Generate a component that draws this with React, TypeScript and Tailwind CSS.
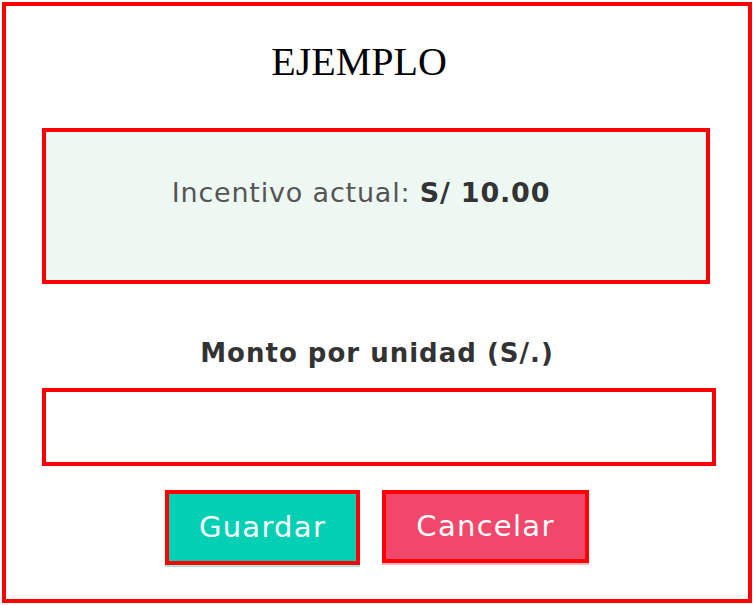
export default function App() {
  return (
    <div className="w-[754px] h-[605px] bg-white p-[2px]">
      <div className="w-[750px] h-[601px] border-4 border-[#ff0000] flex flex-col">
        <div className="h-[122px] pt-[33px] pr-[36px] text-center">
          <h1 className="text-[40px] leading-[46px] text-black" style={{ fontFamily: '"Liberation Serif", "Times New Roman", serif' }}>
            EJEMPLO
          </h1>
        </div>

        <div
          className="flex flex-col"
          style={{ fontFamily: '"DejaVu Sans", "Open Sans", sans-serif' }}
        >
          <div className="ml-[36px] w-[668px] h-[156px] border-4 border-[#ff0000] bg-[#eef8f3] flex items-center justify-center pb-[26px] pr-[30px]">
            <p className="text-[27px] text-[#555] tracking-[0.8px]">
              Incentivo actual: <span className="font-bold text-[#333]">S/ 10.00</span>
            </p>
          </div>

          <label className="mt-[54px] text-center text-[26px] leading-[30px] font-bold text-[#333] tracking-[1px]">
            Monto por unidad (S/.)
          </label>

          <input
            type="text"
            className="mt-[20px] ml-[36px] w-[674px] h-[78px] border-4 border-[#ff0000] bg-white outline-none px-3 text-[20px]"
          />

          <div className="mt-[24px] flex justify-center gap-[22px]">
            <button className="w-[195px] h-[75px] border-4 border-[#ff0000] bg-[#02cfb3] text-white text-[29px] tracking-[1.3px] shadow-[0_2px_0_#9ee9dc]">
              Guardar
            </button>
            <button className="w-[207px] h-[73px] border-4 border-[#ff0000] bg-[#f0476a] text-white text-[29px] tracking-[1.3px] shadow-[0_2px_0_#f6b3c0]">
              Cancelar
            </button>
          </div>
        </div>
      </div>
    </div>
  );
}
